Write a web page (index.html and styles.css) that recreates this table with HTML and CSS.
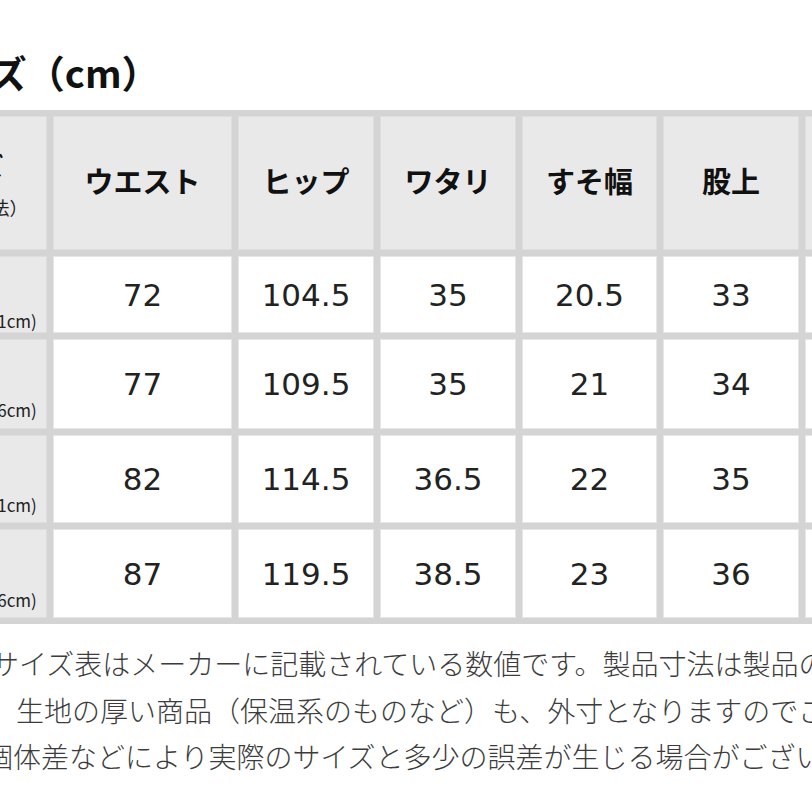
FILE: index.html
```html
<!DOCTYPE html>
<html lang="ja">
<head>
<meta charset="utf-8">
<title>サイズ（cm）</title>
<link rel="stylesheet" href="styles.css">
</head>
<body>
<div class="sheet">
  <h1 class="title">サイズ（cm）</h1>
  <div class="chart">
    <div class="cell head side side-head">
      <span class="side-main head-main">サイズ</span>
      <span class="side-sub head-sub">（ヌード寸法）</span>
    </div>
    <div class="cell head">ウエスト</div>
    <div class="cell head">ヒップ</div>
    <div class="cell head">ワタリ</div>
    <div class="cell head">すそ幅</div>
    <div class="cell head">股上</div>
    <div class="cell head">股下</div>

    <div class="cell side"><span class="side-main">S</span><span class="side-sub row-sub">(ウエスト66～71cm)</span></div>
    <div class="cell num">72</div>
    <div class="cell num">104.5</div>
    <div class="cell num">35</div>
    <div class="cell num">20.5</div>
    <div class="cell num">33</div>
    <div class="cell num">76</div>

    <div class="cell side"><span class="side-main">M</span><span class="side-sub row-sub">(ウエスト71～76cm)</span></div>
    <div class="cell num">77</div>
    <div class="cell num">109.5</div>
    <div class="cell num">35</div>
    <div class="cell num">21</div>
    <div class="cell num">34</div>
    <div class="cell num">76</div>

    <div class="cell side"><span class="side-main">L</span><span class="side-sub row-sub">(ウエスト76～81cm)</span></div>
    <div class="cell num">82</div>
    <div class="cell num">114.5</div>
    <div class="cell num">36.5</div>
    <div class="cell num">22</div>
    <div class="cell num">35</div>
    <div class="cell num">76</div>

    <div class="cell side"><span class="side-main">LL</span><span class="side-sub row-sub">(ウエスト81～86cm)</span></div>
    <div class="cell num">87</div>
    <div class="cell num">119.5</div>
    <div class="cell num">38.5</div>
    <div class="cell num">23</div>
    <div class="cell num">36</div>
    <div class="cell num">76</div>
  </div>
  <div class="notes">
    <div class="note note-1">※サイズ表はメーカーに記載されている数値です。製品寸法は製品の実寸となります。</div>
    <div class="note note-2">また、生地の厚い商品（保温系のものなど）も、外寸となりますのでご注意ください。</div>
    <div class="note note-3">個体差などにより実際のサイズと多少の誤差が生じる場合がございます。</div>
  </div>
</div>
</body>
</html>
```

FILE: styles.css
```css
html, body {
  margin: 0;
  padding: 0;
  width: 812px;
  height: 812px;
  overflow: hidden;
  background: #ffffff;
}

.sheet {
  margin-left: -120px;
  width: 1200px;
  font-family: "Noto Sans CJK JP", "Noto Sans", sans-serif;
  color: #111111;
}

.title {
  margin: 0;
  padding: 50px 0 0 34px;
  height: 43px;
  font-size: 38px;
  line-height: 43px;
  font-weight: 700;
  white-space: nowrap;
}

.chart {
  margin-top: 17px;
  display: grid;
  grid-template-columns: 161px 179px 136px 136px 135px 136px 136px;
  grid-template-rows: 134px 77px 90px 88px 89px;
  gap: 6px;
  padding: 6px;
  width: max-content;
  background: #d4d4d4;
}

.cell {
  display: flex;
  align-items: center;
  justify-content: center;
  background: #ffffff;
  box-shadow: inset 0 0 0 1px #e6e6e6;
  white-space: nowrap;
}

.head {
  background: #e9e9e9;
  box-shadow: inset 0 0 0 1px #dedede;
  font-size: 29px;
  font-weight: 700;
  color: #111111;
  padding-bottom: 6px;
}

.side {
  background: #e9e9e9;
  box-shadow: inset 0 0 0 1px #dedede;
  flex-direction: column;
  gap: 18px;
}

.side-main {
  font-size: 28px;
  line-height: 34px;
  font-weight: 700;
}

.head-main {
  font-size: 25px;
}

.side-sub {
  font-size: 17px;
  line-height: 20px;
  font-weight: 400;
  color: #222222;
}

.row-sub {
  margin-right: 18px;
}

.head-sub {
  font-size: 18px;
  line-height: 22px;
  margin-right: 4px;
}

.side-head {
  gap: 14px;
  padding-bottom: 0;
}

.num {
  font-family: "DejaVu Sans", "Noto Sans", sans-serif;
  font-size: 31px;
  color: #222222;
}

.notes {
  margin-top: 16px;
  font-size: 28px;
  line-height: 46.5px;
  font-weight: 300;
  color: #3c3c3c;
}

.note {
  white-space: nowrap;
}

.note-1 {
  padding-left: 83px;
}

.note-2 {
  padding-left: 52px;
}

.note-3 {
  padding-left: 105px;
}
```
